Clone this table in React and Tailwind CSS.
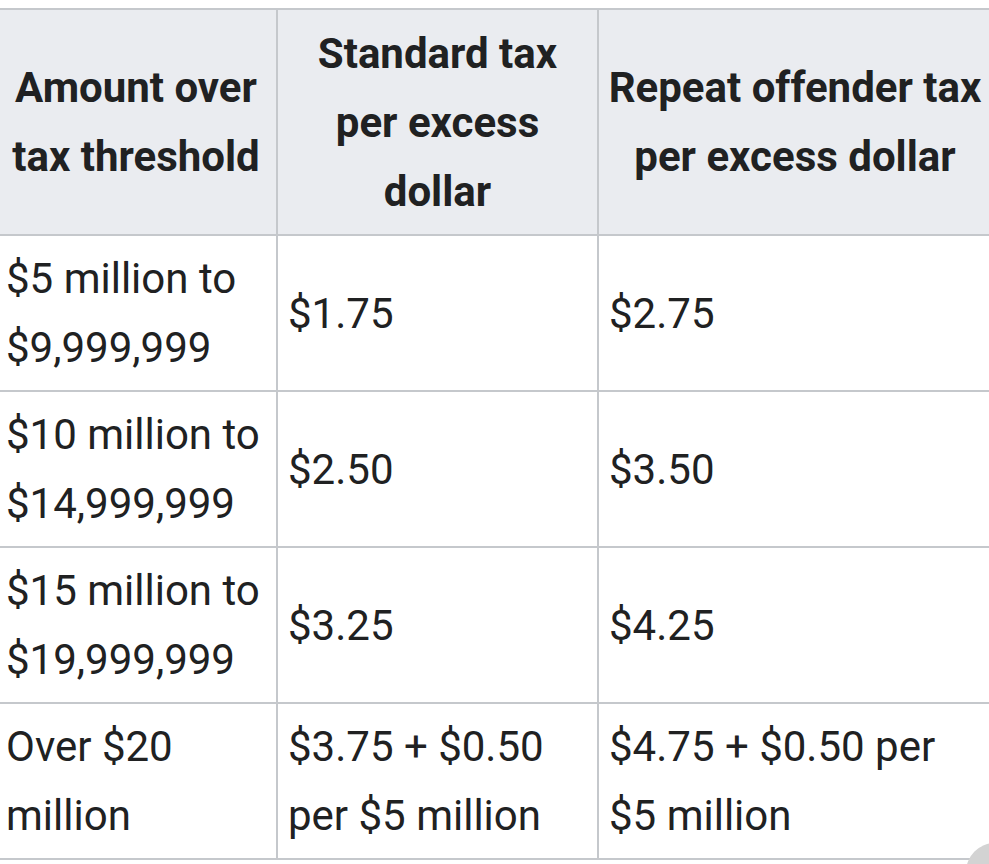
const rows = [
  ["$5 million to $9,999,999", "$1.75", "$2.75"],
  ["$10 million to $14,999,999", "$2.50", "$3.50"],
  ["$15 million to $19,999,999", "$3.25", "$4.25"],
  ["Over $20 million", "$3.75 + $0.50 per $5 million", "$4.75 + $0.50 per $5 million"],
];

const cellPad = ["pl-[10px] pr-[2px]", "pl-[10px] pr-[4px]", "pl-[10px] pr-[30px]"];

const App = () => {
  return (
    <div className="relative w-[989px] h-[864px] overflow-hidden bg-white text-[#202122] font-['Roboto',sans-serif]">
      <table className="mt-[8px] -ml-[6px] w-[997px] border-collapse table-fixed text-[42px] leading-[69px]">
        <colgroup>
          <col className="w-[282px]" />
          <col className="w-[321px]" />
          <col className="w-[394px]" />
        </colgroup>
        <thead>
          <tr className="h-[226px] bg-[#eaecf0]">
            <th className="border-2 border-[#c5c8cc] px-[6px] font-bold text-center align-middle">
              Amount over tax threshold
            </th>
            <th className="border-2 border-[#c5c8cc] px-[12px] font-bold text-center align-middle">
              Standard tax per excess dollar
            </th>
            <th className="border-2 border-[#c5c8cc] px-[2px] font-bold text-center align-middle">
              Repeat offender tax per excess dollar
            </th>
          </tr>
        </thead>
        <tbody>
          {rows.map((r, i) => (
            <tr key={i} className="h-[156px]">
              {r.map((c, j) => (
                <td key={j} className={`border-2 border-[#c5c8cc] ${cellPad[j]} align-middle`}>
                  {c}
                </td>
              ))}
            </tr>
          ))}
        </tbody>
      </table>
      {/* floating button peeking from the corner */}
      <div className="absolute left-[966px] top-[843px] w-[58px] h-[58px] rounded-full bg-[#d3d3d3]" />
    </div>
  );
};

export default App;
